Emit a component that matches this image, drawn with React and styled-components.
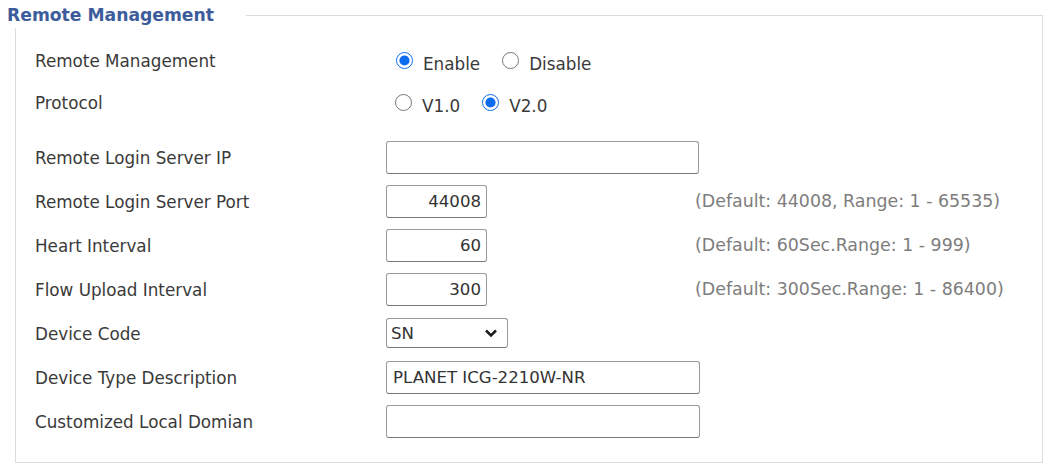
import React from 'react';
import styled, { createGlobalStyle } from 'styled-components';

const GlobalStyle = createGlobalStyle`
  html, body {
    margin: 0;
    padding: 0;
    background: #ffffff;
  }
  body {
    font-family: "DejaVu Sans", Tahoma, Verdana, sans-serif;
    color: #333333;
  }
`;

const Page = styled.div`
  width: 1045px;
  height: 465px;
  box-sizing: border-box;
  padding: 3px 2px 0 15px;
  overflow: hidden;
`;

const Fieldset = styled.fieldset`
  margin: 0;
  height: 460px;
  box-sizing: border-box;
  padding: 11px 0 20px 19px;
  border: 1px solid #dcdcdc;
  min-width: 0;
`;

const Legend = styled.legend`
  margin-left: -29px;
  padding: 0 32px 0 1px;
  height: 25px;
  line-height: 25px;
  background: #ffffff;
  font-size: 17.2px;
  font-weight: bold;
  color: #3d5c9b;
`;

const Row = styled.div`
  display: grid;
  grid-template-columns: 351px 309px 1fr;
  align-items: center;
  height: ${(p) => p.$h || 44}px;
  margin-top: ${(p) => p.$top || 0}px;
`;

const Label = styled.div`
  font-size: 16.8px;
  color: #3a3a3a;
  white-space: nowrap;
  position: relative;
  top: 1px;
`;

const Hint = styled.div`
  font-size: 17.4px;
  color: #7d7d7d;
  white-space: nowrap;
`;

const RadioGroup = styled.div`
  display: flex;
  align-items: center;
  padding-left: ${(p) => p.$pad || 10}px;
`;

const RadioLabel = styled.label`
  display: flex;
  align-items: center;
  font-size: 16.8px;
  color: #3a3a3a;
  margin-right: 22px;
  span {
    position: relative;
    top: 4px;
  }
`;

const Radio = styled.input.attrs({ type: 'radio' })`
  width: 17px;
  height: 17px;
  margin: 0 10px 0 0;
  accent-color: #0b6cf0;
`;

const TextInput = styled.input.attrs({ type: 'text' })`
  width: ${(p) => p.$w}px;
  height: 33px;
  box-sizing: border-box;
  border: 1px solid #9a9a9a;
  border-bottom-color: #777777;
  border-radius: 3px;
  padding: 0 5px 0 6px;
  font-family: inherit;
  font-size: 16.6px;
  color: #333333;
  text-align: ${(p) => p.$align || 'left'};
  background: #ffffff;
  outline: none;
`;

const SelectWrap = styled.div`
  position: relative;
  width: 122px;
  height: 30px;
`;

const Select = styled.select`
  appearance: none;
  width: 100%;
  height: 100%;
  box-sizing: border-box;
  border: 1px solid #9a9a9a;
  border-bottom-color: #777777;
  border-radius: 3px;
  padding: 0 24px 0 4px;
  font-family: inherit;
  font-size: 16.6px;
  color: #333333;
  background: #ffffff;
  outline: none;
`;

const Chevron = styled.svg`
  position: absolute;
  right: 10px;
  top: 10px;
  pointer-events: none;
`;

function ChevronIcon() {
  return (
    <Chevron width="14" height="10" viewBox="0 0 14 10">
      <path d="M2 2.5 L7 7.5 L12 2.5" fill="none" stroke="#1e1e1e" strokeWidth="2.6" />
    </Chevron>
  );
}

export default function App() {
  return (
    <>
      <GlobalStyle />
      <Page>
        <Fieldset>
          <Legend>Remote Management</Legend>

          <Row $h={42}>
            <Label>Remote Management</Label>
            <RadioGroup>
              <RadioLabel>
                <Radio name="rm" defaultChecked />
                <span>Enable</span>
              </RadioLabel>
              <RadioLabel>
                <Radio name="rm" />
                <span>Disable</span>
              </RadioLabel>
            </RadioGroup>
            <div />
          </Row>

          <Row $h={42}>
            <Label>Protocol</Label>
            <RadioGroup $pad={9}>
              <RadioLabel>
                <Radio name="proto" />
                <span>V1.0</span>
              </RadioLabel>
              <RadioLabel>
                <Radio name="proto" defaultChecked />
                <span>V2.0</span>
              </RadioLabel>
            </RadioGroup>
            <div />
          </Row>

          <Row $top={12}>
            <Label>Remote Login Server IP</Label>
            <TextInput $w={313} defaultValue="" />
            <div />
          </Row>

          <Row>
            <Label>Remote Login Server Port</Label>
            <TextInput $w={101} $align="right" defaultValue="44008" />
            <Hint>(Default: 44008, Range: 1 - 65535)</Hint>
          </Row>

          <Row>
            <Label>Heart Interval</Label>
            <TextInput $w={101} $align="right" defaultValue="60" />
            <Hint>(Default: 60Sec.Range: 1 - 999)</Hint>
          </Row>

          <Row>
            <Label>Flow Upload Interval</Label>
            <TextInput $w={101} $align="right" defaultValue="300" />
            <Hint>(Default: 300Sec.Range: 1 - 86400)</Hint>
          </Row>

          <Row>
            <Label>Device Code</Label>
            <SelectWrap>
              <Select defaultValue="SN">
                <option value="SN">SN</option>
                <option value="MAC">MAC</option>
              </Select>
              <ChevronIcon />
            </SelectWrap>
            <div />
          </Row>

          <Row>
            <Label>Device Type Description</Label>
            <TextInput $w={314} defaultValue="PLANET ICG-2210W-NR" />
            <div />
          </Row>

          <Row>
            <Label>Customized Local Domian</Label>
            <TextInput $w={314} defaultValue="" />
            <div />
          </Row>
        </Fieldset>
      </Page>
    </>
  );
}
